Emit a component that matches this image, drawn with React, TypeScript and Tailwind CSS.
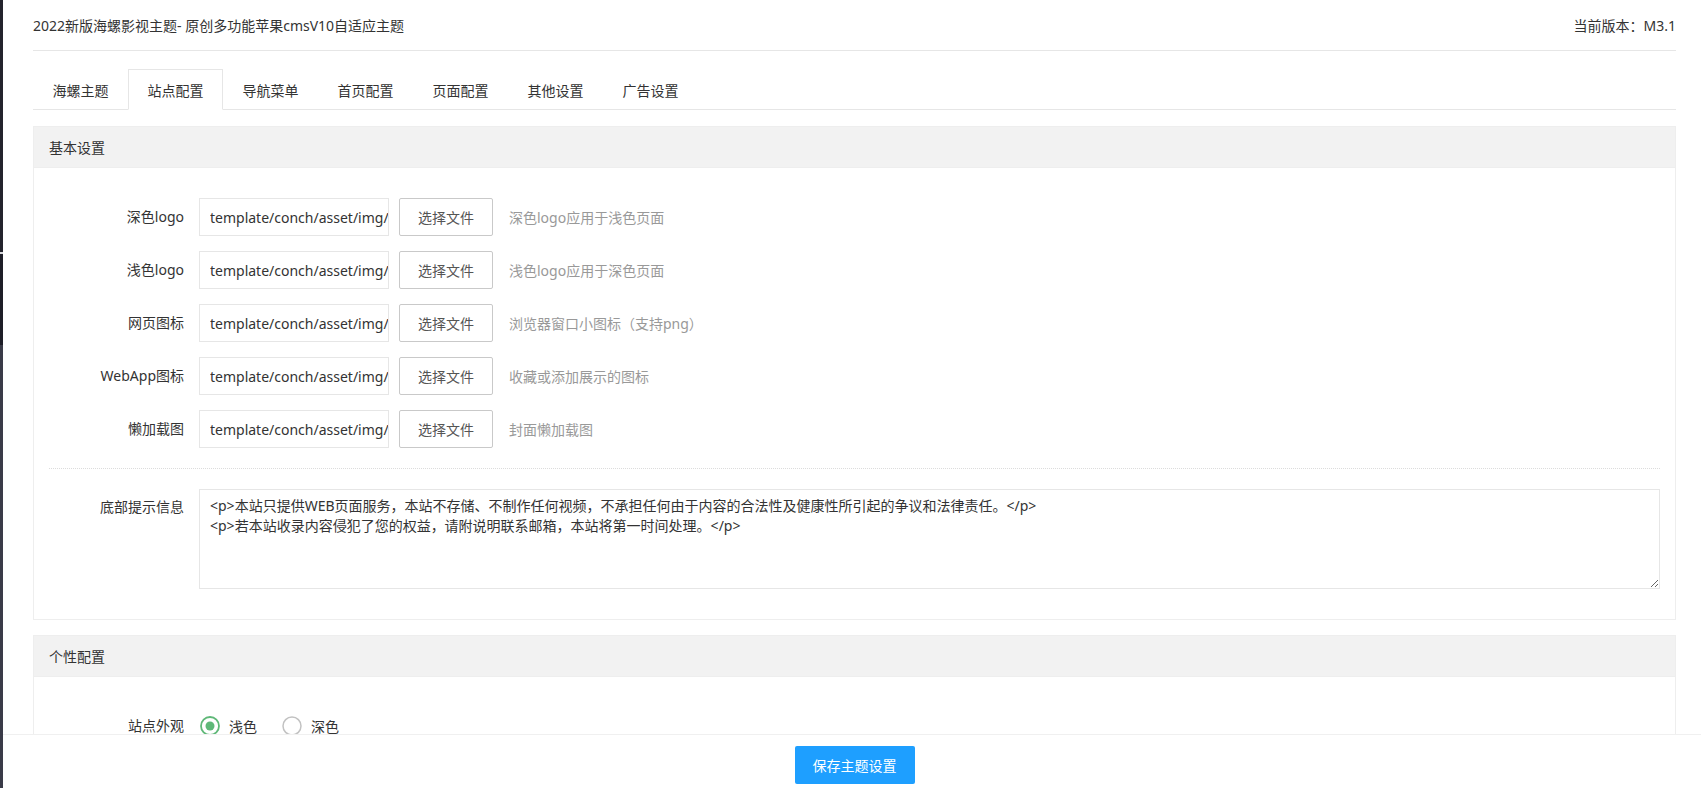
import React, { useState } from "react";

const tabs = ["海螺主题", "站点配置", "导航菜单", "首页配置", "页面配置", "其他设置", "广告设置"];

const fileRows = [
  { label: "深色logo", value: "template/conch/asset/img/logo_black.png", tip: "深色logo应用于浅色页面" },
  { label: "浅色logo", value: "template/conch/asset/img/logo_white.png", tip: "浅色logo应用于深色页面" },
  { label: "网页图标", value: "template/conch/asset/img/favicon.png", tip: "浏览器窗口小图标（支持png）" },
  { label: "WebApp图标", value: "template/conch/asset/img/webapp.png", tip: "收藏或添加展示的图标" },
  { label: "懒加载图", value: "template/conch/asset/img/loading.png", tip: "封面懒加载图" },
];

const footerText =
  "<p>本站只提供WEB页面服务，本站不存储、不制作任何视频，不承担任何由于内容的合法性及健康性所引起的争议和法律责任。</p>\n<p>若本站收录内容侵犯了您的权益，请附说明联系邮箱，本站将第一时间处理。</p>";

const RadioIcon = ({ checked }: { checked: boolean }) => (
  <svg width="22" height="22" viewBox="0 0 22 22" className="shrink-0">
    <circle
      cx="11"
      cy="11"
      r="9"
      fill="none"
      stroke={checked ? "#5FB878" : "#c2c2c2"}
      strokeWidth={checked ? 1.8 : 1.5}
    />
    {checked && <circle cx="11" cy="11" r="4.5" fill="#5FB878" />}
  </svg>
);

const Panel = ({ title, children }: { title: string; children: React.ReactNode }) => (
  <div className="border border-[#eee] bg-white">
    <div className="h-[41px] leading-[41px] bg-[#f2f2f2] border-b border-[#eee] px-[15px] text-[14px] text-[#333]">
      {title}
    </div>
    <div className="px-[15px] pt-[30px] pb-[30px]">{children}</div>
  </div>
);

export default function App() {
  const [active, setActive] = useState(1);
  const [look, setLook] = useState("light");

  return (
    <div className="relative flex h-[788px] overflow-hidden bg-white font-['Noto_Sans','Noto_Sans_CJK_SC',sans-serif] text-[14px] text-[#333]">
      {/* parent frame edge */}
      <div className="w-[3px] shrink-0 flex flex-col">
        <div className="h-[252px] bg-[#23232d]" />
        <div className="h-[2px] bg-[#d8d8dc]" />
        <div className="h-[91px] bg-[#1e1e28]" />
        <div className="flex-1 bg-[#3a3b48]" />
      </div>

      <div className="flex-1 min-w-0 pl-[30px] pr-[25px]">
        {/* Header */}
        <div className="h-[51px] flex items-center justify-between border-b border-[#e6e6e6]">
          <div>2022新版海螺影视主题- 原创多功能苹果cmsV10自适应主题</div>
          <div>当前版本：M3.1</div>
        </div>

        {/* Tabs */}
        <ul className="mt-[18px] h-[41px] flex border-b border-[#e6e6e6]">
          {tabs.map((t, i) => (
            <li
              key={t}
              onClick={() => setActive(i)}
              className={`w-[95px] h-[41px] -mb-px border leading-[41px] text-center cursor-pointer ${
                active === i
                  ? "border-[#e6e6e6] border-b-white bg-white"
                  : "border-transparent"
              }`}
            >
              {t}
            </li>
          ))}
        </ul>

        <div className="mt-[16px]">
          <Panel title="基本设置">
            <div className="flex flex-col gap-[15px]">
              {fileRows.map((r) => (
                <div key={r.label} className="flex items-center h-[38px]">
                  <label className="w-[150px] pr-[15px] text-right leading-[38px] shrink-0">
                    {r.label}
                  </label>
                  <input
                    readOnly
                    value={r.value}
                    className="w-[190px] h-[38px] border border-[#e6e6e6] pl-[10px] pr-0 text-[14px] text-[#333] bg-white outline-none"
                  />
                  <button className="ml-[10px] h-[38px] px-[18px] border border-[#c9c9c9] bg-white text-[#555] rounded-[2px]">
                    选择文件
                  </button>
                  <span className="ml-[16px] text-[#999]">{r.tip}</span>
                </div>
              ))}
            </div>

            <div className="mt-[20px] border-t border-dotted border-[#dcdcdc]" />

            <div className="mt-[20px] flex">
              <label className="w-[150px] pr-[15px] pt-[8px] text-right leading-[20px] shrink-0">
                底部提示信息
              </label>
              <textarea
                readOnly
                value={footerText}
                className="flex-1 h-[100px] border border-[#e6e6e6] px-[10px] py-[6px] leading-[20px] text-[14px] text-[#333] resize-y outline-none"
              />
            </div>
          </Panel>
        </div>

        <div className="mt-[15px]">
          <Panel title="个性配置">
            <div className="flex items-center h-[38px]">
              <label className="w-[150px] pr-[15px] text-right leading-[38px] shrink-0">站点外观</label>
              <div
                className="flex items-center cursor-pointer"
                onClick={() => setLook("light")}
              >
                <RadioIcon checked={look === "light"} />
                <span className="ml-[8px]">浅色</span>
              </div>
              <div
                className="ml-[24px] flex items-center cursor-pointer"
                onClick={() => setLook("dark")}
              >
                <RadioIcon checked={look === "dark"} />
                <span className="ml-[8px]">深色</span>
              </div>
            </div>
            <div className="mt-[15px] flex items-center h-[38px]">
              <label className="w-[150px] pr-[15px] text-right leading-[38px] shrink-0">主题颜色</label>
              <input
                readOnly
                value="#ff9900"
                className="w-[190px] h-[38px] border border-[#e6e6e6] px-[10px] text-[14px] text-[#333] bg-white outline-none"
              />
            </div>
          </Panel>
        </div>
      </div>

      {/* Fixed footer with save button */}
      <div className="absolute left-[3px] right-0 bottom-0 h-[54px] bg-white border-t border-[#f0f0f0] flex justify-center pt-[11px] pl-[30px] pr-[25px]">
        <button className="w-[120px] h-[38px] bg-[#1E9FFF] text-white text-[14px] rounded-[2px]">
          保存主题设置
        </button>
      </div>
    </div>
  );
}
